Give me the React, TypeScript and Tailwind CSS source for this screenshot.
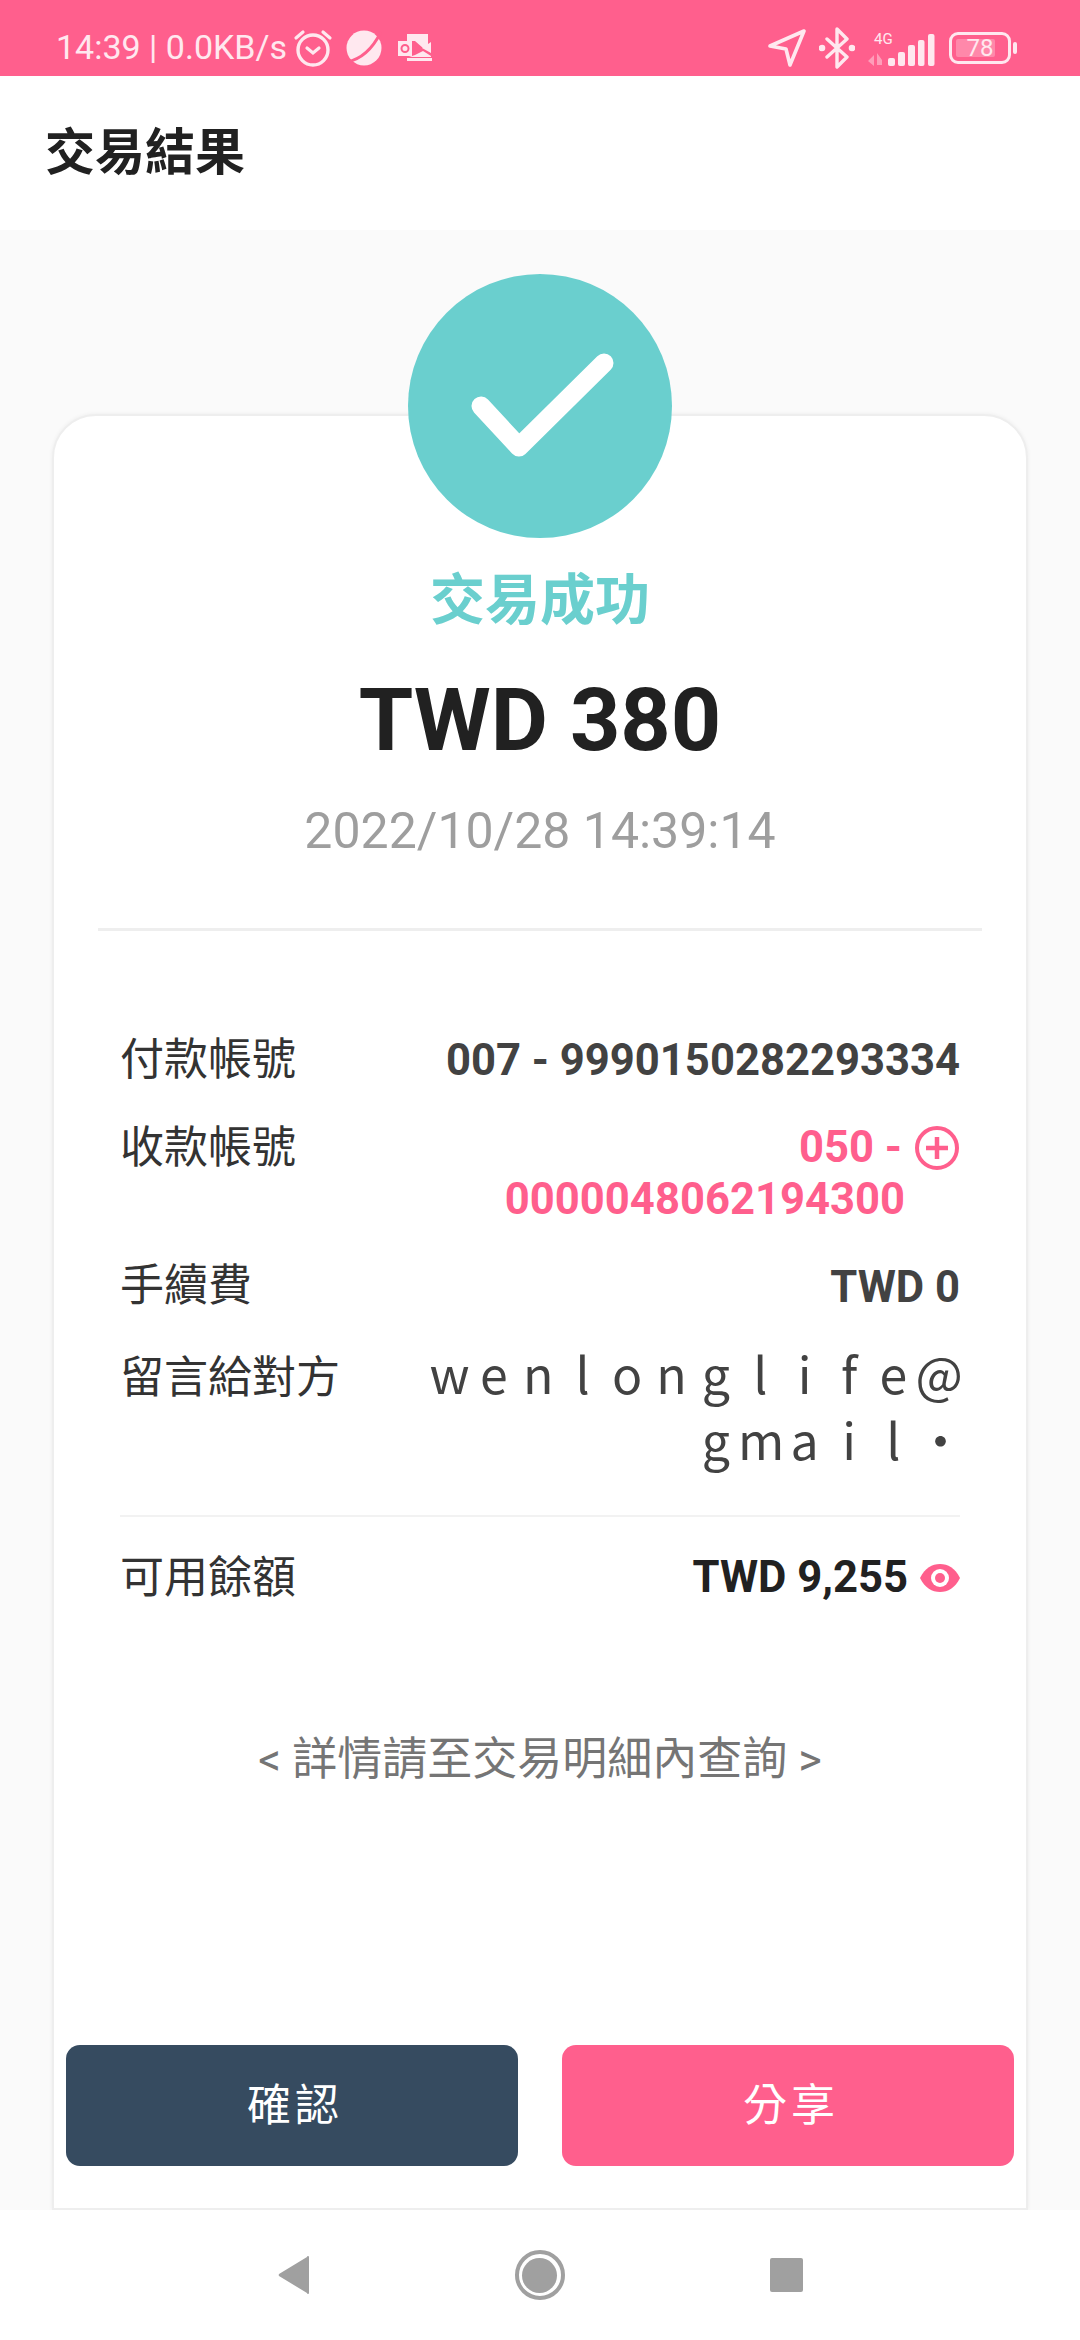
import React from "react";

const Font = "font-['Roboto','Noto_Sans_CJK_TC',sans-serif]";

function StatusBar() {
  return (
    <div className="flex h-[76px] w-full shrink-0 items-center bg-[#ff5f8d] pl-[56px] pr-[63px] pt-[20px] text-[#ffe8ef]">
      <span className="-mt-[2px] text-[34px] leading-[40px]">14:39 | 0.0KB/s</span>
      <svg className="ml-[6px] h-[40px] w-[40px]" viewBox="0 0 40 40" fill="none" stroke="#ffe8ef" strokeLinecap="round">
        <circle cx="20" cy="22" r="15" strokeWidth="3.4" />
        <path d="M14 20l6 5 6-5M3 10l7-6M37 10l-7-6" strokeWidth="3.2" />
      </svg>
      <svg className="ml-[13px] h-[36px] w-[36px]" viewBox="0 0 36 36" fill="#ffe8ef">
        <circle cx="18" cy="18" r="17.5" />
        <path d="M1 32Q22 28 35 2" fill="none" stroke="#ff5f8d" strokeWidth="3" />
      </svg>
      <svg className="ml-[16px] h-[28px] w-[34px]" viewBox="0 0 34 28" fill="#ffe8ef">
        <rect x="0" y="7" width="14" height="15" />
        <circle cx="7" cy="14.5" r="3.5" fill="none" stroke="#ff5f8d" strokeWidth="2" />
        <path d="M9 0h21v11l-5 3-8-7H9zM33 8v11l-9-5zM9 24h25v3H9zM17 21l8-4 8 5v1H11z" />
      </svg>
      <div className="flex-1" />
      <svg className="h-[40px] w-[38px]" viewBox="0 0 38 40" fill="none" stroke="#ffe8ef" strokeWidth="3.6" strokeLinejoin="round">
        <path d="M2 18L36 3 22 37 18 21z" />
      </svg>
      <svg className="ml-[13px] h-[42px] w-[36px]" viewBox="0 0 36 42" fill="none" stroke="#ffe8ef" strokeWidth="3.4" strokeLinecap="round" strokeLinejoin="round">
        <path d="M8 12l20 18-10 10V2l10 10L8 30" />
        <circle cx="3" cy="21" r="1.6" fill="#ffe8ef" />
        <circle cx="33" cy="21" r="1.6" fill="#ffe8ef" />
      </svg>
      <div className="relative ml-[12px] h-[42px] w-[68px]">
        <span className="absolute left-[7px] top-[4px] text-[15px] leading-[16px]">4G</span>
        <svg className="absolute left-0 top-0 h-[42px] w-[68px]" viewBox="0 0 68 42" fill="#ffe8ef">
          <path d="M1 34l6-6v11zM10 26l5 7v5h-5z" opacity="0.45" />
          <rect x="21" y="31" width="7" height="8" rx="2" />
          <rect x="31" y="25" width="7" height="14" rx="2" />
          <rect x="41" y="18" width="7" height="21" rx="2" />
          <rect x="51" y="13" width="6.5" height="26" rx="2" />
          <rect x="61" y="7" width="6.5" height="32" rx="2" />
        </svg>
      </div>
      <div className="relative ml-[14px] flex h-[32px] w-[62px] items-center justify-center rounded-[9px] border-[3px] border-[#ffe8ef]">
        <div className="absolute left-[4px] top-[4px] h-[18px] w-[39px] rounded-[2px] bg-[#ffe8ef] opacity-30" />
        <span className="relative text-[24px] leading-[24px]">78</span>
      </div>
      <div className="ml-[2px] h-[12px] w-[4px] rounded-[2px] bg-[#ffe8ef]" />
    </div>
  );
}

function Row({ label, className, children }: { label: string; className: string; children: React.ReactNode }) {
  return (
    <div className={`flex justify-between ${className}`}>
      <span className="shrink-0 text-[44px] leading-[60px] text-[#333333]">{label}</span>
      {children}
    </div>
  );
}

function Cells({ text }: { text: string }) {
  return (
    <div className="flex justify-end">
      {text.split("").map((c, i) => (
        <span key={i} className="w-[44.4px] text-center">{c}</span>
      ))}
    </div>
  );
}

export default function App() {
  return (
    <div className={`flex h-[2340px] w-[1080px] flex-col overflow-hidden bg-white ${Font}`}>
      <StatusBar />
      <header className="flex h-[154px] shrink-0 items-center bg-white pl-[45px]">
        <h1 className="text-[50px] font-bold leading-[60px] text-[#212121]">交易結果</h1>
      </header>
      <main className="flex min-h-0 flex-1 flex-col items-center overflow-hidden bg-[#fafafa] pt-[44px]">
        <div className="relative z-10 flex h-[264px] w-[264px] shrink-0 items-center justify-center rounded-full bg-[#6acfce]">
          <svg className="h-[264px] w-[264px]" viewBox="0 0 264 264" fill="none" stroke="#fff" strokeWidth="19" strokeLinecap="round" strokeLinejoin="round">
            <path d="M73 132l38 41 85-84" />
          </svg>
        </div>
        <section className="-mt-[124px] flex w-[976px] flex-1 flex-col rounded-t-[44px] border-2 border-[#eeeeee] bg-white shadow-[0_0_4px_rgba(0,0,0,0.06)]">
          <div className="flex flex-col items-center pt-[152px]">
            <div className="text-[55px] font-bold leading-[64px] text-[#6acfce]">交易成功</div>
            <div className="mt-[38px] text-[88px] font-bold leading-[100px] text-[#212121]">TWD 380</div>
            <div className="mt-[32px] text-[50px] leading-[58px] text-[#9e9e9e]">2022/10/28 14:39:14</div>
          </div>
          <div className="mx-[44px] mt-[68px] h-[3px] bg-[#eeeeee]" />
          <div className="flex flex-col px-[66px] pt-[99px]">
            <Row label="付款帳號" className="">
              <span className="pt-[1px] text-[43.6px] font-bold leading-[60px] text-[#424242]">007 - 9990150282293334</span>
            </Row>
            <Row label="收款帳號" className="mt-[27px]">
              <div className="flex flex-col items-end pt-[4px] text-[#ff5f8d]">
                <div className="flex items-center">
                  <span className="text-[43.6px] font-bold leading-[52px]">050 -</span>
                  <svg className="ml-[12px] h-[46px] w-[46px]" viewBox="0 0 46 46" fill="none" stroke="#ff5f8d" strokeWidth="4">
                    <circle cx="23" cy="23" r="20" />
                    <path d="M12 23h22M23 12v22" strokeWidth="4.5" />
                  </svg>
                </div>
                <span className="mr-[55px] text-[43.6px] font-bold leading-[52px]">0000048062194300</span>
              </div>
            </Row>
            <Row label="手續費" className="mt-[30px]">
              <span className="pt-[2px] text-[43.6px] font-bold leading-[60px] text-[#424242]">TWD 0</span>
            </Row>
            <Row label="留言給對方" className="mt-[30px]">
              <div className="-mt-[9px] flex flex-col text-[50px] leading-[66px] text-[#424242] font-['Noto_Sans_CJK_TC',sans-serif]">
                <Cells text="wenlonglife@" />
                <Cells text="gmail·" />
              </div>
            </Row>
            <div className="mt-[44px] h-[2px] bg-[#f2f2f2]" />
            <Row label="可用餘額" className="mt-[31px]">
              <div className="flex items-center">
                <span className="text-[43.6px] font-bold leading-[60px] text-[#212121]">TWD 9,255</span>
                <svg className="ml-[12px] h-[40px] w-[40px]" viewBox="0 0 40 40">
                  <path d="M0 20C5 10 12 6 20 6s15 4 20 14c-5 10-12 14-20 14S5 30 0 20z" fill="#ff5f8d" />
                  <circle cx="20" cy="20" r="9" fill="#fff" />
                  <circle cx="20" cy="20" r="5" fill="#ff5f8d" />
                </svg>
              </div>
            </Row>
          </div>
          <div className="mt-[122px] text-center text-[45px] leading-[60px] text-[#757575]">&lt; 詳情請至交易明細內查詢 &gt;</div>
          <div className="flex-1" />
          <div className="mb-[42px] flex gap-[44px] px-[12px]">
            <button className="flex h-[121px] flex-1 items-center justify-center rounded-[14px] bg-[#364b60] pl-[6px] text-[44px] tracking-[4px] text-white">確認</button>
            <button className="flex h-[121px] flex-1 items-center justify-center rounded-[14px] bg-[#ff5f8d] pl-[6px] text-[44px] tracking-[4px] text-white">分享</button>
          </div>
        </section>
      </main>
      <nav className="flex h-[130px] shrink-0 items-center justify-center bg-white">
        <div className="flex items-center gap-[205px]">
          <svg className="h-[38px] w-[32px]" viewBox="0 0 32 38" fill="#a0a0a0"><path d="M31 1v36a1 1 0 0 1-2 0L1 20a2 2 0 0 1 0-2L29 1a1 1 0 0 1 2 0z" /></svg>
          <div className="flex h-[50px] w-[50px] items-center justify-center rounded-full border-[4px] border-[#a0a0a0]">
            <div className="h-[35px] w-[35px] rounded-full bg-[#a0a0a0]" />
          </div>
          <div className="h-[34px] w-[33px] rounded-[2px] bg-[#a0a0a0]" />
        </div>
      </nav>
    </div>
  );
}
